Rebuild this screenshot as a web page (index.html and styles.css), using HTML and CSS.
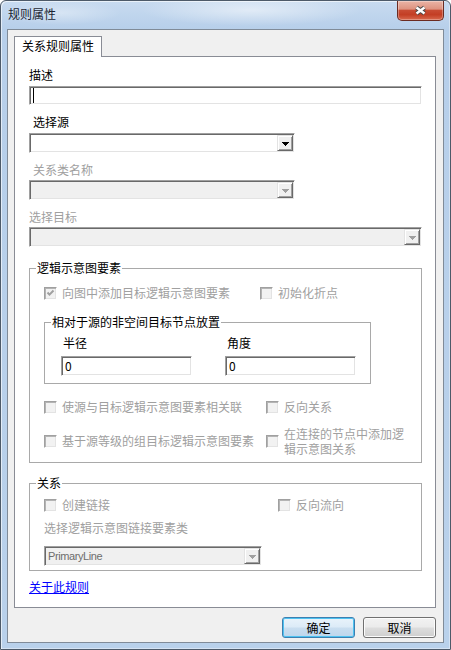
FILE: index.html
```html
<!DOCTYPE html>
<html lang="zh-CN">
<head>
    <meta charset="UTF-8">
    <meta name="viewport" content="width=device-width, initial-scale=1.0">
    <title>规则属性</title>
    <link rel="stylesheet" href="styles.css">
</head>
<body>
    <div class="window">
        <div class="titlebar">
            <span class="title">规则属性</span>
            <div class="close-btn">
                <svg width="45" height="19" viewBox="0 0 45 19">
                    <path d="M18.5 6.5 L26.5 12.5 M26.5 6.5 L18.5 12.5" stroke="#474747" stroke-width="4.4" fill="none"/>
                    <path d="M18.5 6.5 L26.5 12.5 M26.5 6.5 L18.5 12.5" stroke="#fff" stroke-width="2.4" fill="none"/>
                </svg>
            </div>
        </div>

        <div class="client">
            <div class="tab">关系规则属性</div>

            <div class="tab-page">
                <div class="label">描述</div>
                <div class="sunken textbox"><span class="caret"></span></div>

                <div class="label indent">选择源</div>
                <div class="sunken combo">
                    <div class="combo-value"></div>
                    <div class="drop-btn">
                        <svg width="7" height="4" viewBox="0 0 7 4"><path d="M0 0H7V1H6V2H5V3H4V4H3V3H2V2H1V1H0Z" fill="#000"/></svg>
                    </div>
                </div>

                <div class="label indent disabled">关系类名称</div>
                <div class="sunken combo off tight">
                    <div class="combo-value"></div>
                    <div class="drop-btn">
                        <svg width="7" height="4" viewBox="0 0 7 4"><path d="M0 0H7V1H6V2H5V3H4V4H3V3H2V2H1V1H0Z" fill="#a0a0a0"/></svg>
                    </div>
                </div>

                <div class="label disabled">选择目标</div>
                <div class="sunken combo off tight full">
                    <div class="combo-value"></div>
                    <div class="drop-btn">
                        <svg width="7" height="4" viewBox="0 0 7 4"><path d="M0 0H7V1H6V2H5V3H4V4H3V3H2V2H1V1H0Z" fill="#a0a0a0"/></svg>
                    </div>
                </div>

                <!-- logical schematic elements -->
                <fieldset class="group">
                    <legend>逻辑示意图要素</legend>
                    <div class="group-body">
                        <div class="cb-row first">
                            <div class="cb-item col-216">
                                <span class="cb">
                                    <svg width="9" height="9" viewBox="0 0 9 9"><path d="M1.5 3.5 L3.5 5.6 L7.5 1.5" stroke="#a0a0a0" stroke-width="2" fill="none"/></svg>
                                </span>
                                <span class="disabled">向图中添加目标逻辑示意图要素</span>
                            </div>
                            <div class="cb-item">
                                <span class="cb"></span>
                                <span class="disabled">初始化折点</span>
                            </div>
                        </div>

                        <fieldset class="group inner">
                            <legend>相对于源的非空间目标节点放置</legend>
                            <div class="field-grid">
                                <div class="field-label">半径</div>
                                <div class="field-label">角度</div>
                                <div class="sunken textbox num">0</div>
                                <div class="sunken textbox num">0</div>
                            </div>
                        </fieldset>

                        <div class="cb-row second">
                            <div class="cb-item col-222">
                                <span class="cb"></span>
                                <span class="disabled">使源与目标逻辑示意图要素相关联</span>
                            </div>
                            <div class="cb-item">
                                <span class="cb"></span>
                                <span class="disabled">反向关系</span>
                            </div>
                        </div>

                        <div class="cb-row tall">
                            <div class="cb-item col-222">
                                <span class="cb"></span>
                                <span class="disabled">基于源等级的组目标逻辑示意图要素</span>
                            </div>
                            <div class="cb-item">
                                <span class="cb"></span>
                                <span class="disabled two-line">
                                    <span class="line">在连接的节点中添加逻</span>
                                    <span class="line">辑示意图关系</span>
                                </span>
                            </div>
                        </div>
                    </div>
                </fieldset>

                <!-- relation -->
                <fieldset class="group relation">
                    <legend>关系</legend>
                    <div class="group-body">
                        <div class="cb-row link-opts">
                            <div class="cb-item col-234">
                                <span class="cb"></span>
                                <span class="disabled">创建链接</span>
                            </div>
                            <div class="cb-item">
                                <span class="cb"></span>
                                <span class="disabled">反向流向</span>
                            </div>
                        </div>
                        <div class="label disabled link-class">选择逻辑示意图链接要素类</div>
                        <div class="sunken combo off small">
                            <div class="combo-value latin">PrimaryLine</div>
                            <div class="drop-btn">
                                <svg width="7" height="4" viewBox="0 0 7 4"><path d="M0 0H7V1H6V2H5V3H4V4H3V3H2V2H1V1H0Z" fill="#a0a0a0"/></svg>
                            </div>
                        </div>
                    </div>
                </fieldset>

                <div class="about"><a href="#">关于此规则</a></div>
            </div>

            <div class="buttons">
                <button class="btn default">确定</button>
                <button class="btn">取消</button>
            </div>
        </div>
    </div>
</body>
</html>
```

FILE: styles.css
```css
* {
    box-sizing: border-box;
}

body {
    margin: 0;
    font-family: "Noto Sans CJK SC", "DejaVu Sans", sans-serif;
    font-size: 12px;
    line-height: 14px;
    color: #000;
    background: #fff;
}

.window {
    width: 451px;
    height: 650px;
    display: flex;
    flex-direction: column;
    border: 1px solid #4d5a69;
    border-radius: 6px 6px 0 0;
    background:
        radial-gradient(ellipse 110px 16px at 250px 9px, rgba(255,255,255,0.5), rgba(255,255,255,0)),
        radial-gradient(ellipse 60px 12px at 60px 12px, rgba(255,255,255,0.35), rgba(255,255,255,0)),
        linear-gradient(180deg, #c8dbf0 0, #b7cfea 28px, #b9d1eb 100%);
    box-shadow: inset 1px 1px 0 rgba(255,255,255,0.6), inset -1px -1px 0 rgba(255,255,255,0.4);
}

.titlebar {
    flex: none;
    height: 28px;
    display: flex;
    align-items: flex-start;
    padding-left: 7px;
}

.title {
    margin-top: 6px;
    color: #1b2633;
}

.close-btn {
    margin-left: auto;
    margin-right: 6px;
    width: 47px;
    height: 20px;
    border: 1px solid #6b2b21;
    border-top: none;
    border-radius: 0 0 5px 5px;
    background: linear-gradient(180deg, #eab4a6 0, #de9380 42%, #c84b32 50%, #c33e24 72%, #d8694d 100%);
    box-shadow: inset 0 0 0 1px rgba(255,255,255,0.3);
}

.close-btn svg {
    display: block;
}

.client {
    margin: 0 6px;
    height: 614px;
    border: 1px solid #808b98;
    background: #f0f0f0;
    padding: 6px 7px 0 6px;
}

.tab {
    position: relative;
    width: 88px;
    height: 21px;
    margin-bottom: -1px;
    padding: 2px 0 0 7px;
    border: 1px solid #898c95;
    border-bottom: none;
    background: #fff;
}

.tab-page {
    height: 552px;
    border: 1px solid #898c95;
    background: #fff;
    padding: 11px 13px 0 14px;
}

.label.indent {
    padding-left: 4px;
}

.disabled {
    color: #a0a0a0;
}

/* classic 3d sunken edge */
.sunken {
    border: 1px solid;
    border-color: #a0a0a0 #fff #fff #a0a0a0;
    box-shadow: inset 1px 1px #696969, inset -1px -1px #e3e3e3;
    padding: 1px;
    background: #fff;
}

.textbox {
    height: 19px;
    margin-top: 4px;
    padding: 1px 1px 1px 3px;
}

.caret {
    display: block;
    width: 1px;
    height: 100%;
    background: #000;
}

.combo {
    display: flex;
    width: 266px;
    height: 20px;
    margin-top: 4px;
}

.combo.tight {
    margin-top: 3px;
}

.combo.full {
    width: 100%;
}

.combo.off {
    background: #f0f0f0;
}

.combo-value {
    flex: 1;
    padding-left: 2px;
    line-height: 16px;
}

.combo-value.latin {
    font-family: "Liberation Sans", Arial, sans-serif;
    font-size: 11px;
    letter-spacing: -0.4px;
    color: #6d6d6d;
}

.drop-btn {
    width: 16px;
    display: flex;
    align-items: center;
    justify-content: center;
    border: 1px solid;
    border-color: #e3e3e3 #696969 #696969 #e3e3e3;
    box-shadow: inset 1px 1px #fff, inset -1px -1px #a0a0a0;
    background: #f0f0f0;
}

.drop-btn svg {
    display: block;
    margin-top: 1px;
}

.combo + .label {
    margin-top: 10px;
}

.textbox + .label {
    margin-top: 10px;
}

.group {
    margin: 14px 0 0;
    padding: 0 0 6px 6px;
    border: 1px solid #a9a9a9;
    min-width: 0;
}

.group legend {
    padding: 0 1px;
}

.group-body {
    margin-left: 8px;
}

.group.inner {
    width: 327px;
    margin-top: 14px;
    padding-bottom: 7px;
}

.group.relation {
    margin-top: 13px;
    padding-bottom: 4px;
}

.cb-row {
    display: flex;
    align-items: center;
    height: 16px;
}

.cb-row.first {
    margin-top: 10px;
}

.cb-row.second {
    margin-top: 15px;
}

.cb-row.tall {
    height: 30px;
    margin-top: 11px;
}

.cb-row.link-opts {
    margin-top: 7px;
}

.cb-item {
    display: flex;
    align-items: center;
    gap: 5px;
}

.col-216 {
    width: 216px;
}

.col-222 {
    width: 222px;
}

.col-234 {
    width: 234px;
}

.two-line {
    display: flex;
    flex-direction: column;
}

.two-line .line {
    display: block;
    height: 15px;
    line-height: 15px;
    overflow: hidden;
}

.cb {
    flex: none;
    width: 13px;
    height: 13px;
    border: 1px solid;
    border-color: #a0a0a0 #fff #fff #a0a0a0;
    box-shadow: inset 1px 1px #b4b4b4, inset -1px -1px #e3e3e3;
    background: #f2f2f2;
    padding: 1px;
}

.cb svg {
    display: block;
}

.field-grid {
    display: grid;
    grid-template-columns: 131px 131px;
    column-gap: 33px;
    row-gap: 6px;
    margin: 7px 0 0 10px;
}

.field-label {
    padding-left: 2px;
}

.textbox.num {
    height: 20px;
    margin-top: 0;
    line-height: 16px;
}

.link-class {
    margin-top: 8px;
}

.combo.small {
    width: 218px;
    margin-top: 11px;
}

.about {
    margin-top: 9px;
}

.about a {
    color: #0000ff;
}

.buttons {
    display: flex;
    justify-content: flex-end;
    gap: 8px;
    margin-top: 9px;
}

.btn {
    width: 73px;
    height: 21px;
    padding: 0;
    font: inherit;
    line-height: 17px;
    color: #000;
    border: 1px solid #707070;
    border-radius: 3px;
    background: linear-gradient(180deg, #f2f2f2 0, #ebebeb 48%, #dddddd 52%, #cfcfcf 100%);
    box-shadow: inset 0 0 0 1px #fcfcfc;
}

.btn.default {
    border-color: #3c7fb1;
    background: linear-gradient(180deg, #e9f3fb 0, #dcebf7 48%, #c9def0 52%, #bed6ec 100%);
    box-shadow: inset 0 0 0 1px #4ec2f0;
}
```
